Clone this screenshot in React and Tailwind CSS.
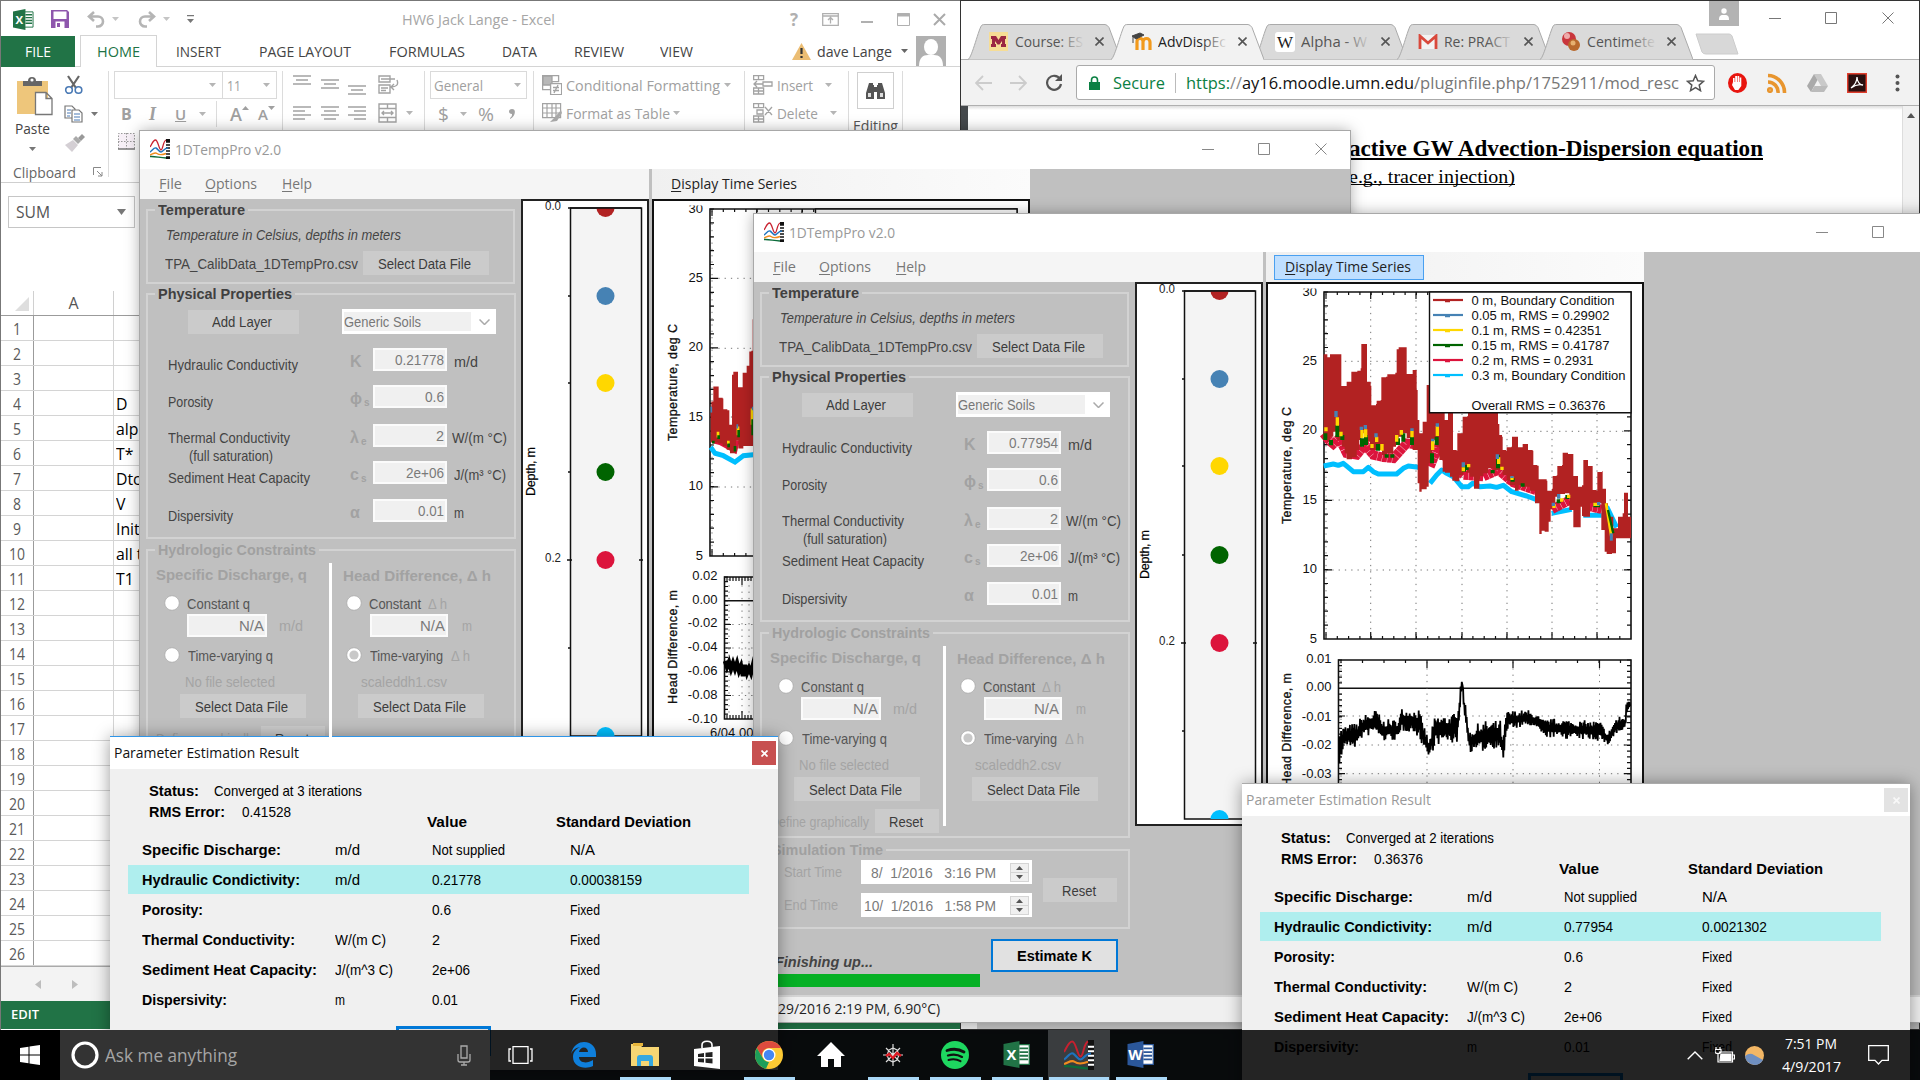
import React, { useLayoutEffect, useRef } from "react";

/* Text run fitted to a fixed advance width. */
function T({ w, className = "", children }) {
  const ref = useRef(null);
  useLayoutEffect(() => {
    const el = ref.current;
    el.style.transform = "none";
    const natural = el.getBoundingClientRect().width;
    if (natural > 0) el.style.transform = `scaleX(${w / natural})`;
  }, [w, children]);
  return (
    <span className="inline-flex shrink-0 items-center overflow-visible whitespace-pre" style={{ width: w }}>
      <span ref={ref} className={`inline-block origin-left ${className}`}>{children}</span>
    </span>
  );
}

const Caret = ({ className = "" }) => (
  <svg className={`h-[4px] w-[7px] shrink-0 ${className}`} viewBox="0 0 7 4"><path d="M0 0h7L3.5 4z" fill="currentColor" /></svg>
);

const Min = () => <svg className="h-3 w-3" viewBox="0 0 12 12"><path d="M0 6.5h12" stroke="currentColor" /></svg>;
const Max = () => <svg className="h-3 w-3" viewBox="0 0 12 12"><path d="M.5.5h11v11H.5z" fill="none" stroke="currentColor" /></svg>;
const Close = () => <svg className="h-3 w-3" viewBox="0 0 12 12"><path d="M.5.5l11 11M11.5.5l-11 11" stroke="currentColor" /></svg>;

/* ---------------------------------------------------------------- Excel */

const ExcelLogo = ({ className, color = "#217346", letter = "X" }) => (
  <svg className={className} viewBox="0 0 22 22">
    <path d="M12 3h9v16h-9z" fill="#fff" stroke={color} strokeWidth="1" />
    <path d="M13 6h7M13 9h7M13 12h7M13 15h7" stroke={color} strokeWidth="1.5" />
    <path d="M0 2.5L13 0v22L0 19.5z" fill={color} />
    <text x="6.5" y="15.5" fontSize="12" fontWeight="700" fill="#fff" textAnchor="middle" fontFamily="Open Sans, sans-serif">{letter}</text>
  </svg>
);

const ribbonTabs = [
  ["INSERT", 45, "ml-[19px]"], ["PAGE LAYOUT", 92, "ml-[38px]"], ["FORMULAS", 76, "ml-[38px]"],
  ["DATA", 35, "ml-[37px]"], ["REVIEW", 50, "ml-[37px]"], ["VIEW", 33, "ml-[36px]"],
];

const Lines = ({ d, className = "" }) => (
  <svg className={`h-[20px] w-[18px] shrink-0 ${className}`} viewBox="0 0 18 20"><path d={d} stroke="#a3a3a3" strokeWidth="1.4" /></svg>
);
const Sep = ({ className = "" }) => <div className={`w-px shrink-0 bg-[#dcdcdc] ${className}`} />;

function Ribbon() {
  return (
    <div className="flex h-[116px] items-start border-b border-[#cfcfcf] pt-[4px] text-[15px] text-[#a0a0a0]">
      <div className="flex h-[112px] w-[107px] shrink-0 flex-col">
        <div className="flex">
          <div className="ml-[14px] mt-[5px] flex w-[38px] flex-col">
            <svg className="ml-[1px] h-[40px] w-[38px]" viewBox="0 0 38 40">
              <path d="M1 5h31v33H1z" fill="#eec67b" />
              <path d="M7 10V5h5a4 4 0 018 0h6v5z" fill="#666" /><circle cx="16" cy="4" r="1.6" fill="#fff" />
              <path d="M19.500 16.500h10.500l6 6v16h-16.500zM30 16.500v6h6" fill="#fff" stroke="#777" strokeWidth="1.300" />
            </svg>
            <div className="mt-[4px] flex h-[16px] items-center text-[#444]"><T w={35}>Paste</T></div>
            <Caret className="ml-[14px] mt-[11px] text-[#777]" />
          </div>
          <div className="ml-[11px] flex flex-col">
            <svg className="mt-[4px] h-[20px] w-[20px]" viewBox="0 0 20 20" fill="none">
              <path d="M4 1l8 12M15 1L7 13" stroke="#666" strokeWidth="2.200" />
              <circle cx="5" cy="15" r="3.300" stroke="#4a7ab5" strokeWidth="1.600" /><circle cx="14.500" cy="15" r="3.300" stroke="#4a7ab5" strokeWidth="1.600" />
            </svg>
            <div className="mt-[10px] flex items-center">
              <svg className="h-[18px] w-[20px]" viewBox="0 0 20 18" fill="#fff" stroke="#777" strokeWidth="1.200">
                <path d="M1 1h7l3 3v9H1z" /><path d="M8 5h7l3 3v9H8z" /><path d="M3 5h4M3 8h4M3 11h3M10 9h6M10 12h6M10 15h6" stroke="#4a7ab5" />
              </svg>
              <Caret className="ml-[7px] text-[#777]" />
            </div>
            <svg className="mt-[11px] h-[18px] w-[21px]" viewBox="0 0 21 18">
              <path d="M1 11l8-5 5 5-6 7z" fill="#d4cfd4" /><path d="M9 5l3-3 5 5-3 3z" fill="#aaa" /><path d="M14 4l4-4 3 3-4 4z" fill="#999" />
            </svg>
          </div>
        </div>
        <div className="mt-[11px] flex items-center pl-[12px] text-[#666]">
          <div className="flex h-[18px] items-center"><T w={63}>Clipboard</T></div>
          <svg className="ml-[17px] h-[10px] w-[10px]" viewBox="0 0 10 10" fill="none" stroke="#888"><path d="M.5 8V.5H8M4 4l5 5M9 5v4H5" /></svg>
        </div>
      </div>
      <Sep className="h-[106px]" />
      <div className="ml-[5px] w-[163px] shrink-0">
        <div className="flex h-[28px] border border-[#dadada]">
          <div className="flex w-[109px] items-center justify-end border-r border-[#dadada] pr-[6px]"><Caret className="text-[#b5b5b5]" /></div>
          <div className="flex w-[53px] items-center pl-[4px]"><T w={14}>11</T><Caret className="ml-[22px] text-[#b5b5b5]" /></div>
        </div>
        <div className="mt-[3px] flex h-[24px] items-center font-semibold">
          <span className="ml-[7px] w-[28px] text-[16px] font-bold">B</span>
          <span className="w-[26px] font-['Liberation_Serif',serif] text-[18px] italic">I</span>
          <span className="w-[24px] text-[15px] underline">U</span>
          <Caret className="text-[#b5b5b5]" />
          <Sep className="ml-[10px] h-[26px]" />
          <span className="ml-[13px] flex w-[28px] items-center text-[18px]">A<Caret className="mb-[12px] rotate-180" /></span>
          <span className="flex items-center text-[15px]">A<Caret className="mb-[12px]" /></span>
        </div>
        <svg className="ml-[4px] mt-[7px] h-[17px] w-[17px]" viewBox="0 0 17 17" fill="#f7f0f7" stroke="#999"><path d="M.5 16V.5h16V16M8.500 0v16M0 8.500h17" strokeDasharray="1.500 1.500" /><path d="M0 16h17" stroke="#777" strokeWidth="1.500" /></svg>
      </div>
      <Sep className="ml-[5px] h-[70px]" />
      <div className="ml-[10px] flex w-[131px] shrink-0 flex-col">
        <div className="flex h-[28px] items-center">
          <Lines d="M0 1h18M3 5h12M0 9h18" /><Lines className="ml-[10px]" d="M0 5h18M3 9h12M0 13h18" /><Lines className="ml-[9px] mt-[6px]" d="M0 8h18M3 12h12M0 16h18" />
          <svg className="ml-[12px] h-[20px] w-[21px] shrink-0" viewBox="0 0 21 20" fill="none" stroke="#a3a3a3" strokeWidth="1.400"><path d="M1 1h11v6H1zM1 10h11v8H1zM3 4h14M3 13h7M3 15.500h5M19 5c2 5-1 7-6 7m3-3l-3 3 3 3" /></svg>
        </div>
        <div className="flex h-[28px] items-center">
          <Lines d="M0 4h18M0 8h12M0 12h18M0 16h12" /><Lines className="ml-[10px]" d="M0 4h18M3 8h12M0 12h18M3 16h12" /><Lines className="ml-[9px]" d="M0 4h18M6 8h12M0 12h18M6 16h12" />
          <svg className="ml-[12px] h-[20px] w-[19px] shrink-0" viewBox="0 0 19 20" fill="none" stroke="#a3a3a3" strokeWidth="1.400"><path d="M1 1h17v18H1zM1 5.500h17M1 14.500h17M9.500 1v4M9.500 15v4M4 10h11M6 8l-2 2 2 2M13 8l2 2-2 2" /></svg>
          <Caret className="ml-[9px] text-[#b5b5b5]" />
        </div>
      </div>
      <Sep className="h-[70px]" />
      <div className="ml-[5px] w-[97px] shrink-0">
        <div className="flex h-[28px] items-center justify-between border border-[#dadada] pl-[3px] pr-[5px]"><T w={49}>General</T><Caret className="text-[#b5b5b5]" /></div>
        <div className="mt-[3px] flex h-[24px] items-center text-[19px]"><span className="ml-[8px] w-[22px]">$</span><Caret className="text-[#b5b5b5]" /><span className="ml-[11px] w-[31px]"><T w={16}>%</T></span><svg className="h-[10px] w-[6px]" viewBox="0 0 6 10"><path d="M3 0c5 0 3 8-2 10V9c2-1 2-3 2-4-4 0-4-5 0-5z" fill="#a3a3a3" /></svg></div>
      </div>
      <Sep className="ml-[6px] h-[70px]" />
      <div className="ml-[8px] w-[195px] shrink-0">
        <div className="flex h-[28px] items-center">
          <svg className="h-[20px] w-[20px]" viewBox="0 0 20 20" fill="none" stroke="#a3a3a3" strokeWidth="1.300"><path d="M.6.6h16v6h-16zM.6 6.600h8v8h-8z" /><path d="M1 1h9v9H1z" fill="#b8b8b8" /><path d="M8.600 8.600h11v11h-11zM11 12.500h6M11 15.500h6M16 10l-4 8" fill="#fff" /></svg>
          <span className="ml-[4px]" /><T w={154}>Conditional Formatting</T><Caret className="ml-[4px] text-[#b5b5b5]" />
        </div>
        <div className="flex h-[28px] items-center">
          <svg className="h-[20px] w-[20px]" viewBox="0 0 20 20" fill="none" stroke="#a3a3a3" strokeWidth="1.200"><path d="M.6.6h18v14H.6zM.6 5h18M.6 10h18M5 1v14M10 1v14M14 1v14" /><path d="M19 7l-6 7-5 5 7-1 5-8z" fill="#aaa" stroke="none" /></svg>
          <span className="ml-[4px]" /><T w={104}>Format as Table</T><Caret className="ml-[3px] text-[#b5b5b5]" />
        </div>
      </div>
      <Sep className="ml-[7px] h-[70px]" />
      <div className="ml-[8px] w-[90px] shrink-0">
        <div className="flex h-[28px] items-center">
          <svg className="h-[20px] w-[20px]" viewBox="0 0 20 20" fill="none" stroke="#a3a3a3" strokeWidth="1.300"><path d="M.6.6h10v4H.6zM5.500 1v4M.6 13h10v6H.6zM5.500 13v6M.6 16h10M1 9h9M4 6L1 9l3 3M10 7h9v4h-9z" /></svg>
          <span className="ml-[4px]" /><T w={36}>Insert</T><Caret className="ml-[12px] text-[#b5b5b5]" />
        </div>
        <div className="flex h-[28px] items-center">
          <svg className="h-[20px] w-[20px]" viewBox="0 0 20 20" fill="none" stroke="#a3a3a3" strokeWidth="1.300"><path d="M.6.6h10v4H.6zM5.500 1v4M.6 13h10v6H.6zM5.500 13v6M.6 16h10M4 7h6v4H4zM12 4l7 8M19 4l-7 8" /></svg>
          <span className="ml-[4px]" /><T w={41}>Delete</T><Caret className="ml-[12px] text-[#b5b5b5]" />
        </div>
      </div>
      <Sep className="ml-[5px] h-[70px]" />
      <div className="ml-[4px] flex w-[45px] shrink-0 flex-col items-center">
        <div className="mt-[1px] flex h-[37px] w-[37px] items-center justify-center border border-[#cfcfcf]">
          <svg className="h-[17px] w-[19px]" viewBox="0 0 19 17" fill="#555"><path d="M3 1h4v2h1v14H0v-6zM12 1h4l3 10v6h-8V3h1zM8 5h3v5H8z" /><path d="M2 11h3v4H2zM14 11h3v4h-3z" fill="#ddd" /></svg>
        </div>
        <div className="mt-[7px] flex h-[18px] items-center text-[#555]"><T w={45}>Editing</T></div>
      </div>
      <Sep className="ml-[4px] h-[70px]" />
    </div>
  );
}

const cells = { 4: "D", 5: "alpha", 6: "T*", 7: "Dtc", 8: "V", 9: "Initial", 10: "all t", 11: "T1" };

function Excel() {
  return (
    <div className="absolute left-0 top-0 flex h-[1030px] w-[960px] flex-col overflow-hidden border-l border-t border-[#777] bg-white font-['Open_Sans',sans-serif]">
      <div className="flex h-[35px] shrink-0 items-center pt-[1px]">
        <ExcelLogo className="ml-[12px] h-[21px] w-[21px]" />
        <svg className="ml-[17px] h-[18px] w-[18px]" viewBox="0 0 18 18"><path d="M0 0h16l2 2v16H0z" fill="#8e57ad" /><path d="M2.500 1.500h13V9h-13zM4.500 11.500h9V18h-9z" fill="#fff" /><path d="M6 13h3v4H6z" fill="#8e57ad" /></svg>
        <svg className="ml-[18px] h-[17px] w-[18px]" viewBox="0 0 18 17" fill="none" stroke="#b5b5b5" strokeWidth="2.600"><path d="M7 1L2 5.500 7 10M2 5.500h9a5 5 0 010 10h-2" /></svg>
        <Caret className="ml-[7px] text-[#c5c5c5]" />
        <svg className="ml-[19px] h-[17px] w-[18px]" viewBox="0 0 18 17" fill="none" stroke="#b5b5b5" strokeWidth="2.600"><path d="M11 1l5 4.500L11 10M16 5.500H7a5 5 0 000 10h2" /></svg>
        <Caret className="ml-[7px] text-[#c5c5c5]" />
        <svg className="ml-[17px] h-[8px] w-[7px]" viewBox="0 0 7 8" fill="#777"><path d="M0 0h7v1.300H0zM0 4h7L3.500 8z" /></svg>
        <span className="ml-[208px]" /><T w={153} className="text-[15px] text-[#a6a6a6]">HW6 Jack Lange - Excel</T>
        <div className="ml-[235px] flex items-center text-[#b0b0b0]">
          <span className="w-[32px] text-[17px] font-bold leading-none">?</span>
          <svg className="h-[13px] w-[17px]" viewBox="0 0 17 13" fill="none" stroke="#b0b0b0" strokeWidth="1.300"><path d="M.7.7h15.600v11.600H.7zM1 3h15M8.500 10.500v-6M6 7l2.500-2.500L11 7" /></svg>
          <svg className="ml-[22px] h-[13px] w-[12px]" viewBox="0 0 12 13"><path d="M0 9h12" stroke="#b0b0b0" strokeWidth="2" /></svg>
          <svg className="ml-[24px] h-[13px] w-[13px]" viewBox="0 0 13 13" fill="none" stroke="#b0b0b0"><path d="M.5.5h12v12H.5z" /><path d="M0 2h13" strokeWidth="3" /></svg>
          <svg className="ml-[23px] h-[13px] w-[13px]" viewBox="0 0 13 13"><path d="M1 1l11 11M12 1L1 12" stroke="#aaa" strokeWidth="2" /></svg>
        </div>
      </div>
      <div className="flex h-[31px] shrink-0 items-center border-b border-[#d4d4d4] text-[15px] text-[#444]">
        <div className="flex h-[31px] w-[74px] items-center justify-center bg-[#217346] text-white"><T w={26}>FILE</T></div>
        <div className="ml-[5px] flex h-[32px] w-[77px] items-center justify-center border border-b-0 border-[#d4d4d4] bg-white text-[#217346]"><T w={43}>HOME</T></div>
        {ribbonTabs.map(([label, w, gap]) => (<span key={label} className={`${gap} flex`}><T w={w}>{label}</T></span>))}
        <svg className="ml-[99px] h-[17px] w-[19px]" viewBox="0 0 19 17"><path d="M9.500 0L19 17H0z" fill="#ebbd73" /><path d="M9.500 5v6M9.500 13v2" stroke="#333" strokeWidth="2.200" /></svg>
        <span className="ml-[6px]" /><T w={75}>dave Lange</T><Caret className="ml-[9px] text-[#666]" />
        <svg className="ml-[8px] h-[30px] w-[30px]" viewBox="0 0 30 30"><path d="M0 0h30v30H0z" fill="#b0b0b0" /><ellipse cx="15" cy="11" rx="7" ry="8" fill="#fff" /><path d="M3 30c0-8 4-11 9-11h6c5 0 9 3 9 11z" fill="#fff" /></svg>
      </div>
      <Ribbon />
      <div className="ml-[7px] mt-[13px] flex h-[32px] w-[127px] shrink-0 items-center justify-between border border-[#c6c6c6] pl-[7px] pr-[8px] text-[16px] text-[#555]">
        <T w={34}>SUM</T><svg className="h-[6px] w-[9px]" viewBox="0 0 9 6"><path d="M0 0h9L4.500 6z" fill="#777" /></svg>
      </div>
      <div className="mt-[63px] flex h-[25px] shrink-0 border-b border-[#9b9b9b] text-[16px] text-[#555]">
        <div className="flex w-[33px] items-end justify-end border-r border-[#d0d0d0] pb-[4px] pr-[4px]"><svg className="h-[14px] w-[14px]" viewBox="0 0 14 14"><path d="M14 0v14H0z" fill="#dedede" /></svg></div>
        <div className="flex w-[80px] items-center justify-center border-r border-[#d0d0d0]">A</div>
      </div>
      {Array.from({ length: 26 }, (_, i) => i + 1).map((n) => (
        <div key={n} className="flex h-[25px] shrink-0 border-b border-[#d4d4d4] text-[16px] text-[#5a5a5a]">
          <div className="flex w-[33px] items-center justify-center border-r border-[#9b9b9b] pt-[2px]"><T w={n > 9 ? 16 : 8}>{n}</T></div>
          <div className="w-[80px] border-r border-[#d4d4d4]" />
          <div className="flex items-center pl-[2px] pt-[2px] text-[17px] text-black"><span className="origin-left scale-x-[0.93]">{cells[n] || ""}</span></div>
        </div>
      ))}
      <div className="flex h-[35px] shrink-0 items-center border-t border-[#aaa] bg-[#f3f3f3]">
        <svg className="ml-[34px] h-[9px] w-[6px]" viewBox="0 0 6 9"><path d="M6 0v9L0 4.500z" fill="#bdbdbd" /></svg>
        <svg className="ml-[31px] h-[9px] w-[6px]" viewBox="0 0 6 9"><path d="M0 0v9l6-4.500z" fill="#bdbdbd" /></svg>
      </div>
      <div className="flex h-[28px] shrink-0 items-center bg-[#217346] pl-[10px] text-[13px] font-semibold text-white"><T w={28}>EDIT</T></div>
    </div>
  );
}

/* --------------------------------------------------------------- Chrome */

const favicons = {
  m: <svg className="h-[19px] w-[19px]" viewBox="0 0 19 19"><path d="M0 0h19v19H0z" fill="#f6dd96" /><path d="M2 4h5l2.500 4L12 4h5v3h-1v5h1v3h-5v-3h1V9l-2.500 3.500h-2L6 9v3h1v3H2v-3h1V7H2z" fill="#9b2743" /></svg>,
  moodle: <svg className="h-[20px] w-[20px]" viewBox="0 0 20 20"><path d="M5 18V10a3 3 0 016-1v9M11 18V10a3 3 0 017 0v8" fill="none" stroke="#f29a1d" strokeWidth="3.200" /><path d="M0 4l8-3 4 2-8 4zM1 5v6" fill="#444" stroke="#444" /></svg>,
  w: <svg className="h-[20px] w-[20px]" viewBox="0 0 20 20"><rect width="20" height="20" rx="3" fill="#fff" /><text x="10" y="16" textAnchor="middle" fontSize="17" fontFamily="Liberation Serif, serif" fill="#222">W</text></svg>,
  gmail: <svg className="h-[16px] w-[20px]" viewBox="0 0 20 16"><path d="M2 1h16v14H2z" fill="#f3f3f3" /><path d="M2 15V2l8 7 8-7v13" fill="none" stroke="#d9493c" strokeWidth="2.800" /></svg>,
  ball: <svg className="h-[20px] w-[20px]" viewBox="0 0 20 20"><circle cx="8" cy="7" r="7" fill="#c9363c" /><circle cx="6" cy="4" r="3" fill="#eaa" /><circle cx="13" cy="13" r="6" fill="#b8692d" /><circle cx="12" cy="11" r="2.500" fill="#e6b070" /></svg>,
};

const browserTabs = [
  ["m", "Course: ES", 68, false], ["moodle", "AdvDispEc", 68, true], ["w", "Alpha - W", 66, false],
  ["gmail", "Re: PRACT", 66, false], ["ball", "Centimete", 68, false],
];

function Chrome() {
  return (
    <div className="absolute left-[960px] top-0 flex h-[1030px] w-[960px] flex-col overflow-hidden border border-[#333] bg-white font-['Open_Sans',sans-serif]">
      <div className="flex h-[58px] shrink-0 items-end">
        <div className="flex pl-[7px]">
          {browserTabs.map(([icon, title, w, active]) => (
            <div key={title} className={`relative -mr-[10px] flex h-[35px] w-[153px] items-center ${active ? "z-10" : ""}`}>
              <svg className="absolute inset-0 h-[36px] w-[153px]" viewBox="0 0 153 36"><path d="M0 35.500C4 34 11 3 14 1q1-.5 3-.5h120q2 0 4 3L153 35.500" fill={active ? "#f2f2f2" : "#dadada"} stroke="#aaa" />{active && <path d="M1 36h151" stroke="#f2f2f2" strokeWidth="2" />}</svg>
              <span className="relative ml-[21px] flex h-[20px] w-[20px] items-center">{favicons[icon]}</span>
              <span className={`relative ml-[6px] flex w-[70px] text-[15px] ${active ? "text-[#222]" : "text-[#555]"}`}>
                <T w={w}>{title}</T>
                <span className={`absolute right-0 top-0 h-full w-[28px] bg-linear-to-r from-transparent ${active ? "to-[#f2f2f2]" : "to-[#dadada]"}`} />
              </span>
              <svg className="relative ml-[10px] h-[9px] w-[9px]" viewBox="0 0 9 9"><path d="M.5.5l8 8M8.500.5l-8 8" stroke="#555" strokeWidth="1.600" /></svg>
            </div>
          ))}
        </div>
        <svg className="mb-[4px] ml-[12px] h-[22px] w-[44px]" viewBox="0 0 44 22"><path d="M1 1h33q2 0 3 2l6 18H11q-3 0-4-2z" fill="#d8d8d8" stroke="#ccc" /></svg>
        <div className="-ml-[36px] flex items-start self-start text-[#777]">
          <div className="ml-[6px] flex h-[25px] w-[30px] items-center justify-center bg-[#b3b3b3]"><svg className="h-[12px] w-[12px]" viewBox="0 0 12 12" fill="#fff"><circle cx="6" cy="3" r="2.700" /><path d="M1 12c0-5 2-5 5-5s5 0 5 5z" /></svg></div>
          <span className="ml-[30px] mt-[11px]"><Min /></span><span className="ml-[44px] mt-[11px]"><Max /></span><span className="ml-[45px] mt-[11px]"><Close /></span>
        </div>
      </div>
      <div className="flex h-[47px] shrink-0 items-center border-b border-t border-[#b0b0b0] bg-[#f2f2f2]">
        <svg className="ml-[14px] h-[16px] w-[17px]" viewBox="0 0 17 16" fill="none" stroke="#ccc" strokeWidth="1.800"><path d="M8 1L1 8l7 7M1 8h16" /></svg>
        <svg className="ml-[18px] h-[16px] w-[17px]" viewBox="0 0 17 16" fill="none" stroke="#ccc" strokeWidth="1.800"><path d="M9 1l7 7-7 7M16 8H0" /></svg>
        <svg className="ml-[18px] h-[17px] w-[18px]" viewBox="0 0 18 17" fill="none" stroke="#555" strokeWidth="2.200"><path d="M15 5a7 7 0 101 5" /><path d="M17 0v7h-7z" fill="#555" stroke="none" /></svg>
        <div className="ml-[13px] flex h-[35px] w-[639px] items-center rounded-[3px] border border-[#aaa] bg-white text-[17px]">
          <svg className="ml-[12px] h-[14px] w-[11px]" viewBox="0 0 11 14"><path d="M0 6h11v8H0z" fill="#0b8043" /><path d="M2.500 7V4a3 3 0 016 0v3" fill="none" stroke="#0b8043" strokeWidth="1.600" /></svg>
          <span className="ml-[13px]" /><T w={52} className="text-[#0b8043]">Secure</T>
          <div className="ml-[10px] mr-[10px] h-[20px] w-px bg-[#bbb]" />
          <T w={44} className="text-[#0b8043]">https:</T><T w={12} className="text-[#888]">//</T><T w={172} className="text-[#111]">ay16.moodle.umn.edu</T><T w={265} className="text-[#777]">/pluginfile.php/1752911/mod_resc</T>
          <svg className="ml-[7px] h-[18px] w-[19px]" viewBox="0 0 19 18"><path d="M9.500 1.500l2.300 5.300 5.700.5-4.300 3.800 1.300 5.600-5-3-5 3 1.300-5.600L1.500 7.300l5.700-.5z" fill="none" stroke="#555" strokeWidth="1.500" /></svg>
        </div>
        <svg className="ml-[13px] h-[20px] w-[19px]" viewBox="0 0 19 20"><ellipse cx="9.500" cy="10" rx="9.500" ry="10" fill="#e8150f" /><path d="M5 9V5h1.600v4h.6V3h1.800v6h.5V3h1.700v6h.5V4.500h1.600V13l-3 4H7l-3-5z" fill="#fff" /></svg>
        <svg className="ml-[20px] h-[20px] w-[20px]" viewBox="0 0 20 20" fill="none" stroke="#e8952e" strokeWidth="3.600"><circle cx="3" cy="17" r="1.300" /><path d="M1 9a10 10 0 0110 11M1 2.500A17 17 0 0117.500 20" /></svg>
        <svg className="ml-[20px] h-[18px] w-[21px]" viewBox="0 0 21 18"><path d="M7 0h7l7 12h-7z" fill="#c9c9c9" /><path d="M7 0l3.500 6L4 18 0 12z" fill="#aaa" /><path d="M7.500 12H21l-4 6H4z" fill="#bbb" /></svg>
        <svg className="ml-[19px] h-[20px] w-[20px]" viewBox="0 0 20 20"><path d="M.7.700h18.600v18.600H.7z" fill="#2a1010" stroke="#e03e2d" strokeWidth="1.500" /><path d="M4 15c4-3 6-7 6-11 0 5 3 8 6 8-4-1-8 0-12 3z" fill="none" stroke="#fff" strokeWidth="1.300" /></svg>
        <svg className="ml-[28px] h-[18px] w-[5px]" viewBox="0 0 5 18" fill="#555"><circle cx="2.500" cy="2.500" r="2" /><circle cx="2.500" cy="9" r="2" /><circle cx="2.500" cy="15.500" r="2" /></svg>
      </div>
      <div className="flex grow">
        <div className="w-[7px] bg-[#45494c]" />
        <div className="w-[934px] bg-linear-to-b from-[#ddd] to-white to-[4px] font-['Liberation_Serif',serif] text-black">
          <div className="ml-[381px] mt-[29px] flex h-[29px] items-center text-[23px] font-bold underline [text-decoration-skip-ink:none]"><T w={414}>active GW Advection-Dispersion equation</T></div>
          <div className="ml-[381px] flex h-[26px] items-center text-[19px] underline [text-decoration-skip-ink:none]"><T w={166}>e.g., tracer injection)</T></div>
        </div>
        <div className="flex w-[17px] justify-center border-l border-[#ddd] bg-[#f1f1f1] pt-[7px]"><svg className="h-[5px] w-[8px]" viewBox="0 0 8 5"><path d="M0 5h8L4 0z" fill="#555" /></svg></div>
      </div>
      <div className="h-[17px] shrink-0 border-l-[16px] border-[#e8e8e8] bg-[#c1c1c1]" />
    </div>
  );
}

/* ----------------------------------------------------------- 1DTempPro */

const TempLogo = ({ className }) => (
  <svg className={className} viewBox="0 0 20 20" fill="none">
    <path d="M16 0h4v20h-4z" fill="#111" /><path d="M16 4.500h4M16 7.500h4M16 10.500h4M16 13.500h4M16 16.500h4" stroke="#fff" strokeWidth="1.300" />
    <path d="M0 8C2 5 3 1 5.500 1S9 11 11 11s2-9 5-10" stroke="#c8202f" strokeWidth="1.300" />
    <path d="M0 13c2-1 4-5 6-4s3 4 5 4 3-4 7-4" stroke="#1e73be" strokeWidth="1.400" />
    <path d="M0 16c3-1 5-3 7-1.500s5 1.500 9 0" stroke="#f08c1e" strokeWidth="1.400" /><path d="M0 17.500c4-.5 9 1 16 1.500" stroke="#0b6b3a" strokeWidth="1.400" />
  </svg>
);

const Btn = ({ w, className, children }) => (
  <div className={`flex shrink-0 items-center justify-center bg-[#cbcbcb] pr-[3px] text-[#3c3c3c] ${className}`}><T w={w}>{children}</T></div>
);
const Field = ({ w, className, children }) => (
  <div className={`flex h-[23px] shrink-0 items-center justify-end border-2 border-[#fbfbfb] bg-[#f0f0f0] pb-px pr-px text-[15px] text-[#7a7a7a] ${className}`}><T w={w}>{children}</T></div>
);
const Legend = ({ w, dim, children }) => (
  <div className={`-mt-[10px] ml-[7px] flex h-[16px] w-fit items-center bg-[#c0c0c0] px-[3px] font-bold ${dim ? "text-[#a0a0a0]" : "text-[#404040]"}`}><T w={w}>{children}</T></div>
);
const Radio = ({ on }) => (
  <svg className="h-[16px] w-[16px] shrink-0" viewBox="0 0 16 16"><circle cx="8" cy="8" r="7.300" fill="#fff" stroke="#aaa" strokeWidth=".8" />{on && <circle cx="8" cy="8" r="4.600" fill="#c8c8c8" />}</svg>
);
const Sym = ({ children, sub }) => (
  <span className="mt-[4px] w-[22px] shrink-0 whitespace-nowrap text-[16px] font-bold leading-none text-[#a2a2a2]">{children}{sub && <sub className="ml-[2px] text-[10px]">{sub}</sub>}</span>
);

function PropRow({ label, lw, sym, sub, value, vw, unit, uw, className }) {
  return (
    <div className={`ml-[20px] flex h-[23px] items-center ${className}`}>
      <div className="mt-[9px] w-[182px] shrink-0"><T w={lw}>{label}</T></div>
      <Sym sub={sub}>{sym}</Sym>
      <Field w={vw} className="ml-px w-[74px]">{value}</Field>
      {unit && <div className="ml-[7px] mt-[4px]"><T w={uw}>{unit}</T></div>}
    </div>
  );
}

function Spinner() {
  return (
    <div className="flex h-[19px] w-[19px] flex-col gap-px bg-[#d5d5d5] p-px">
      <div className="flex grow items-center justify-center bg-[#f0f0f0]"><svg className="h-[4px] w-[7px]" viewBox="0 0 7 4"><path d="M0 4h7L3.500 0z" fill="#555" /></svg></div>
      <div className="flex grow items-center justify-center bg-[#f0f0f0]"><Caret className="text-[#555]" /></div>
    </div>
  );
}

function LeftPane({ k, file }) {
  return (
    <div className="flex w-[381px] shrink-0 flex-col pl-[6px] text-[15px] leading-none text-[#444]">
      <div className="mt-[10px] h-[75px] w-[369px] shrink-0 border-2 border-[#d2d2d2]">
        <Legend w={87}>Temperature</Legend>
        <div className="ml-[18px] mt-[7px] flex h-[20px] items-center italic"><T w={235}>Temperature in Celsius, depths in meters</T></div>
        <div className="ml-[17px] mt-[7px] flex h-[24px] items-center"><T w={193}>TPA_CalibData_1DTempPro.csv</T><Btn w={93} className="ml-[5px] h-[24px] w-[126px]">Select Data File</Btn></div>
      </div>
      <div className="mt-[9px] h-[246px] w-[370px] shrink-0 border-2 border-[#d2d2d2]">
        <Legend w={134}>Physical Properties</Legend>
        <div className="ml-[40px] mt-[8px] flex h-[25px] items-center">
          <Btn w={60} className="h-[24px] w-[111px]">Add Layer</Btn>
          <div className="ml-[43px] flex h-[25px] w-[154px] items-center border-2 border-white bg-white">
            <div className="flex h-[19px] w-[127px] items-center bg-[#f0f0f0] text-[#777]"><T w={77}>Generic Soils</T></div>
            <svg className="ml-[8px] h-[6px] w-[11px]" viewBox="0 0 11 6"><path d="M.5.5l5 5 5-5" fill="none" stroke="#aaa" strokeWidth="1.500" /></svg>
          </div>
        </div>
        <PropRow className="mt-[14px]" label="Hydraulic Conductivity" lw={130} sym="K" value={k} vw={49} unit="m/d" uw={24} />
        <PropRow className="mt-[14px]" label="Porosity" lw={45} sym="ϕ" sub="s" value="0.6" vw={19} />
        <div className="ml-[20px] mt-[16px] flex h-[23px] items-center">
          <div className="mt-[21px] w-[182px] shrink-0"><div className="flex h-[18px] items-center"><T w={122}>Thermal Conductivity</T></div><div className="ml-[21px] flex h-[18px] items-center"><T w={84}>(full saturation)</T></div></div>
          <Sym sub="e">λ</Sym><Field w={8} className="ml-px w-[74px]">2</Field><div className="ml-[5px] mt-[4px]"><T w={55}>W/(m °C)</T></div>
        </div>
        <PropRow className="mt-[14px]" label="Sediment Heat Capacity" lw={142} sym="c" sub="s" value="2e+06" vw={38} unit="J/(m³ °C)" uw={52} />
        <PropRow className="mt-[15px]" label="Dispersivity" lw={65} sym="α" value="0.01" vw={26} unit="m" uw={10} />
      </div>
      <div className="mt-[10px] h-[206px] w-[370px] shrink-0 border-2 border-[#d2d2d2]">
        <Legend w={158} dim>Hydrologic Constraints</Legend>
        <div className="mt-[6px] flex h-[180px]">
          <div className="flex w-[181px] shrink-0 flex-col text-[#555]">
            <div className="ml-[8px] flex h-[22px] shrink-0 items-center font-bold text-[#a2a2a2]"><T w={151}>Specific Discharge, q</T></div>
            <div className="ml-[16px] mt-[8px] flex h-[20px] shrink-0 items-center gap-[7px]"><Radio /><T w={63}>Constant q</T></div>
            <div className="ml-[39px] mt-px flex h-[23px] shrink-0 items-center"><Field w={25} className="w-[80px]">N/A</Field><span className="ml-[12px] flex text-[#a4a4a4]"><T w={24}>m/d</T></span></div>
            <div className="ml-[16px] mt-[8px] flex h-[20px] shrink-0 items-center gap-[8px]"><Radio /><T w={85}>Time-varying q</T></div>
            <div className="ml-[37px] mt-[8px] flex h-[16px] shrink-0 items-center text-[#a4a4a4]"><T w={90}>No file selected</T></div>
            <Btn w={93} className="ml-[32px] mt-[5px] h-[24px] w-[126px]">Select Data File</Btn>
            <div className="ml-[8px] mt-[8px] flex h-[24px] shrink-0 items-center justify-between text-[#a4a4a4]"><T w={99}>Define graphically</T><Btn w={34} className="mr-[4px] h-[24px] w-[64px]">Reset</Btn></div>
          </div>
          <div className="z-10 w-[3px] shrink-0 bg-white" />
          <div className="flex flex-col text-[#555]">
            <div className="ml-[11px] mt-px flex h-[22px] shrink-0 items-center font-bold text-[#a2a2a2]"><T w={148}>Head Difference, Δ h</T></div>
            <div className="ml-[14px] mt-[7px] flex h-[20px] shrink-0 items-center gap-[7px]"><Radio /><T w={52}>Constant</T><T w={19} className="text-[#a4a4a4]">Δ h</T></div>
            <div className="ml-[38px] mt-px flex h-[23px] shrink-0 items-center"><Field w={25} className="w-[78px]">N/A</Field><span className="ml-[14px] flex text-[#a4a4a4]"><T w={10}>m</T></span></div>
            <div className="ml-[14px] mt-[8px] flex h-[20px] shrink-0 items-center gap-[8px]"><Radio on /><T w={73}>Time-varying</T><T w={19} className="text-[#a4a4a4]">Δ h</T></div>
            <div className="ml-[29px] mt-[8px] flex h-[16px] shrink-0 items-center text-[#a4a4a4]"><T w={86}>{file}</T></div>
            <Btn w={93} className="ml-[26px] mt-[5px] h-[24px] w-[126px]">Select Data File</Btn>
          </div>
        </div>
      </div>
      <div className="mt-[11px] h-[80px] w-[370px] shrink-0 border-2 border-[#d2d2d2]">
        <Legend w={111} dim>Simulation Time</Legend>
        <div className="flex items-center">
          <div className="ml-[22px] w-[77px] pt-[2px] text-[#a4a4a4]"><div className="flex h-[23px] items-center"><T w={58}>Start Time</T></div><div className="mt-[10px] flex h-[23px] items-center"><T w={54}>End Time</T></div></div>
          <div className="w-[171px] pt-[3px] text-[#7a7a7a]">
            <div className="flex h-[24px] items-center justify-between bg-white pl-[10px] pr-[3px]"><T w={125}>{"8/  1/2016   3:16 PM"}</T><Spinner /></div>
            <div className="mt-[9px] flex h-[24px] items-center justify-between bg-white pl-[3px] pr-[3px]"><T w={132}>{"10/  1/2016   1:58 PM"}</T><Spinner /></div>
          </div>
          <Btn w={34} className="ml-[11px] mt-[6px] h-[24px] w-[74px]">Reset</Btn>
        </div>
      </div>
      <div className="mt-[10px] flex">
        <div className="w-[231px]"><div className="mt-[13px] flex h-[18px] items-center pl-[15px] font-bold italic"><T w={98}>Finishing up...</T></div><div className="mt-[4px] h-[13px] w-[220px] bg-[#06b025]" /></div>
        <div className="flex h-[33px] w-[127px] items-center justify-center border-2 border-[#0078d7] bg-[#e1e1e1] font-bold text-black"><T w={75}>Estimate K</T></div>
      </div>
    </div>
  );
}

const probes = [[9, "#b22222"], [97, "#4682b4"], [184, "#ffd700"], [273, "#006400"], [361, "#dc143c"], [537, "#00bfff"]];

function DepthPanel() {
  return (
    <svg className="h-[544px] w-[128px] shrink-0" viewBox="0 0 128 544" fontFamily="Liberation Sans, Arial, sans-serif">
      <path d="M1 1h126v542H1z" fill="#fff" stroke="#222" strokeWidth="2" />
      <clipPath id="col"><path d="M49 9h71v528H49z" /></clipPath>
      <path d="M49.500 9h71v528h-71z" fill="#f4f4f4" stroke="#111" strokeWidth="1.500" />
      <g clipPath="url(#col)">{probes.map(([y, c]) => <circle key={y} cx="84.500" cy={y} r="9" fill={c} />)}</g>
      <path d="M47 9h73M47 97h3M47 184h3M47 273h3M46 361h5M118 361h4M47 449h3" stroke="#111" strokeWidth="1.300" />
      <text x="24" y="11" fontSize="13" textLength="16" lengthAdjust="spacingAndGlyphs" fill="#222">0.0</text>
      <text x="24" y="363" fontSize="13" textLength="16" lengthAdjust="spacingAndGlyphs" fill="#222">0.2</text>
      <text transform="translate(14 297) rotate(-90)" fontSize="12.500" textLength="49" fill="#000" stroke="#000" strokeWidth=".2">Depth, m</text>
    </svg>
  );
}

const legend = [
  ["#b22222", "0 m, Boundary Condition", 143], ["#4682b4", "0.05 m, RMS = 0.29902", 138], ["#ffd700", "0.1 m, RMS = 0.42351", 130],
  ["#006400", "0.15 m, RMS = 0.41787", 138], ["#dc143c", "0.2 m, RMS = 0.2931", 122], ["#00bfff", "0.3 m, Boundary Condition", 154],
];

/* Head-difference envelope: x, centre, half-amplitude. */
const headB = [[228, 550, 60], [233, 560, 65], [238, 530, 32], [270, 525, 38], [282, 500, 34], [300, 492, 34], [316, 485, 38], [326, 512, 34], [350, 510, 30], [366, 510, 34], [372, 480, 36], [390, 480, 34], [412, 490, 42], [424, 530, 34], [436, 570, 28], [450, 510, 44], [500, 505, 44], [506, 450, 60], [510, 375, 20], [513, 370, 16], [517, 440, 30], [524, 500, 24], [528, 545, 30], [556, 530, 46], [600, 520, 38], [607, 580, 34], [612, 500, 44], [620, 480, 28], [665, 475, 24], [684, 485, 22], [700, 505, 26], [740, 505, 30], [780, 510, 28], [830, 512, 30], [848, 538, 18], [866, 500, 26], [888, 490, 26], [892, 440, 26], [901, 430, 16]];

function headPath(env) {
  let seed = 7;
  const rnd = () => { seed = (seed * 16807) % 2147483647; return seed / 2147483647; };
  const pts = [];
  for (let i = 0; i < env.length - 1; i++) {
    const [x0, c0, a0] = env[i], [x1, c1, a1] = env[i + 1];
    const n = Math.max(1, Math.round((x1 - x0) / 1.3));
    for (let j = 0; j < n; j++) {
      const t = j / n, sgn = pts.length % 2 ? 1 : -1, r = rnd();
      pts.push([x0 + (x1 - x0) * t, c0 + (c1 - c0) * t + sgn * (a0 + (a1 - a0) * t) * (0.35 + 0.7 * r * r)]);
    }
  }
  return "M" + pts.map(([x, y]) => `${(486 + x * 0.4337).toFixed(1)} ${(346 + y / 3).toFixed(1)}`).join("L");
}

/* Turns an outline into horizontal and vertical segments only. */
function stepped(points) {
  const p = points.split(" ").map((s) => s.split(",").map(Number));
  return p.flatMap(([x, y], i) => (i ? [`${x},${p[i - 1][1]}`, `${x},${y}`] : [`${x},${y}`])).join(" ");
}

const blotches = [
  ["#dc143c", "M221 640L236 660 250 672 268 655 290 700 320 705 345 675 370 705 400 712 430 715 470 670 500 675M540 740L565 680 605 735 640 765 700 770 745 750 790 788 860 812M906 868L960 840M1000 855L1055 868", 26],
  ["#006400", "M226 640v20M243 660v16M262 615v36M277 645v15M336 655v25M348 645v30M384 672v20M410 703v10M427 703v10M444 655v20M460 640v25M486 650v25M546 700v30M560 650v25M650 735v15M642 740v15M744 705v40M728 750v10M788 775v10M818 790v10M926 838v12M952 825v12M1030 856h20", 12],
  ["#ffd700", "M228 622v12M262 592v25M273 635v14M336 630v24M347 628v24M380 650v16M366 672v12M396 672v20M440 645v20M454 630v14M486 632v20M548 660v30M562 618v30M640 742v12M656 732v10M746 712v20M756 740v10M786 770v10M912 852v12M935 835v10M956 824v10M1030 853h18", 10],
  ["#4682b4", "M258 573v18M334 620v10M346 615v12M378 640v12M486 625v8M548 656v8M562 610v10M640 727v14M742 703v14M786 768v6M926 822v14M910 848v10M1046 846v10", 10],
];

const redB = "221,403 232,403 232,412 240,403 270,403 274,498 288,498 290,485 302,485 304,455 322,452 332,445 334,372 348,372 351,485 362,497 364,556 378,552 380,542 392,540 394,472 408,470 412,463 436,458 440,388 446,382 468,382 470,462 484,462 488,450 498,450 500,510 503,600 508,640 516,640 518,605 530,603 530,495 538,490 538,570 582,570 584,600 592,600 594,570 606,570 609,690 620,692 622,640 636,640 638,590 652,588 654,570 742,570 744,612 748,645 756,650 758,690 768,692 770,682 784,680 786,650 802,650 804,682 816,682 818,672 832,672 834,690 848,692 850,735 862,737 866,778 890,782 892,812 906,806 908,768 920,766 922,738 936,735 938,698 952,698 954,702 966,702 970,768 984,800 996,796 1000,720 1012,720 1014,738 1026,738 1028,810 1040,812 1042,756 1056,754 1058,806 1068,850 1074,890 1090,925 1104,925 1104,890 1118,880 1122,818 1132,818 1134,890 1143,895 1143,955 1103,955 1098,1000 1086,1002 1070,995 1064,930 1054,850 1028,850 1020,890 1000,888 996,860 992,922 978,922 970,870 958,820 945,822 930,830 916,850 906,868 902,905 896,935 884,932 875,942 868,850 855,812 840,800 820,795 806,812 795,795 780,782 770,765 758,750 730,745 715,760 700,768 690,778 688,806 680,806 672,770 660,758 650,750 640,765 628,784 615,782 607,770 600,758 585,755 578,720 568,680 560,660 552,690 546,730 536,800 530,808 515,815 508,790 503,690 488,655 470,640 458,650 446,655 438,680 430,700 410,705 396,690 370,690 360,665 350,640 334,660 328,690 320,712 306,718 290,700 284,680 276,660 262,635 250,650 240,665 232,655 221,640";
const redA = "632,650 634,620 640,600 640,578 654,578 656,610 668,612 670,642 682,645 688,685 694,685 696,545 700,537 712,537 714,580 724,580 728,540 740,520 748,480 754,478 758,390 770,385 770,745 730,752 715,730 708,765 690,755 680,745 668,738 655,735 632,735";

const yTicks = (x, len, y0, step, n) => Array.from({ length: n }, (_, i) => `M${x} ${(y0 + i * step).toFixed(1)}h${len}`).join("");
const xTicks = (y, len, x0, step, n) => Array.from({ length: n }, (_, i) => `M${(x0 + i * step).toFixed(1)} ${y}v${len}`).join("");

/* Drawn in window coordinates, panel origin at (512, 68). */
function ChartPanel({ variant }) {
  const b = variant === "b";
  const headLabels = b ? [["0.01", 448.5], ["0.00", 477], ["-0.01", 506.5], ["-0.02", 535], ["-0.03", 563.5]] : [["0.02", 448.500], ["0.00", 472.500], ["-0.02", 496], ["-0.04", 520], ["-0.06", 543.500], ["-0.08", 568], ["-0.10", 592]];
  const headGrid = b ? [502, 531, 559.700] : [493.500, 517, 540.800, 564.500];
  const gridX = [572, 616.700, 662, 708, 753, 798, 843];
  return (
    <svg className="h-[544px] w-[378px] shrink-0" viewBox="512 68 378 544" fontFamily="Liberation Sans, Arial, sans-serif" fontSize="13" fill="#111">
      <path d="M513 69h376v542H513z" fill="#fff" stroke="#111" strokeWidth="2" />
      <path d="M570 78h307v347H570z" fill="none" stroke="#111" strokeWidth="1.600" />
      <path d={gridX.map((x) => `M${x} 80v343`).join("") + "M572 147.300h303M572 217.300h303M572 286h303M572 356h303"} stroke="#777" strokeDasharray="1.300 5" fill="none" />
      <path d={yTicks(570, 4, 78, 13.88, 25) + yTicks(873, 4, 78, 13.88, 25) + xTicks(78, 3, 572, 11.3, 27) + xTicks(422, 3, 572, 11.3, 27) + gridX.map((x) => `M${x} 78v7M${x} 418v7`).join("") + yTicks(570, 8, 147.3, 69.5, 4) + yTicks(870, 7, 147.3, 69.5, 4)} stroke="#111" strokeWidth="1.200" />
      {b ? (
        <g transform="translate(496 6) scale(.33333)">
          <path d="M221 738L250 732 265 736 280 730 292 740 310 755 340 755 355 742 370 755 385 762 440 762 460 745 475 738 505 742M540 790L560 765 575 750 590 760 610 770 635 800 655 800 668 790 690 800 720 798 740 802 760 796 785 815 830 828 868 842M905 880L965 868M1000 886L1055 886M1070 860L1100 922" fill="none" stroke="#00bfff" strokeWidth="15" strokeLinejoin="round" />
          <path d={blotches[0][1]} fill="none" stroke="#dc143c" strokeWidth="28" strokeDasharray="14 1" />
          <polygon points={stepped(redB)} fill="#b22222" />
          {blotches.slice(1).map(([c, d, w]) => <path key={c} d={d} fill="none" stroke={c} strokeWidth={w} />)}
          <path d="M1068 850L1076 900 1084 950" stroke="#ffd700" strokeWidth="8" fill="none" /><path d="M1074 870L1082 905 1090 940" stroke="#006400" strokeWidth="7" fill="none" /><path d="M1084 940v22" stroke="#4682b4" strokeWidth="9" />
        </g>
      ) : (
        <g transform="translate(360 49) scale(.33333 .35714)">
          <path d="M632 748L645 765 670 772 705 790 730 772 775 768" fill="none" stroke="#00bfff" strokeWidth="14" />
          <path d="M640 730L660 735 705 758 712 730" fill="none" stroke="#dc143c" strokeWidth="14" />
          <polygon points={stepped(redA)} fill="#b22222" />
          <path d="M654 705v16M685 730v10M714 690v25M756 640v45" stroke="#ffd700" strokeWidth="8" /><path d="M656 715v10M686 738v10M705 745v15M716 700v20M758 670v45M640 730v8" stroke="#006400" strokeWidth="8" /><path d="M634 635v16M712 684v12M758 635v10" stroke="#4682b4" strokeWidth="5" />
        </g>
      )}
      <path d="M675.500 78H877v120.700H675.500z" fill="#fff" stroke="#111" strokeWidth="1.400" />
      {legend.map(([c, t, w], i) => (
        <g key={t}><path d={`M679 ${86 + i * 15}h30`} stroke={c} strokeWidth="2.200" /><path d={`M691 ${87.5 + i * 15}h5`} stroke={c} strokeWidth="1.500" /><text x="717.500" y={90.5 + i * 15} fontSize="12" textLength={w} lengthAdjust="spacingAndGlyphs">{t}</text></g>
      ))}
      <text x="717.500" y="195.500" fontSize="12" textLength="134" lengthAdjust="spacingAndGlyphs">Overall RMS = 0.36376</text>
      {[["30", 82], ["25", 151], ["20", 219.5], ["15", 290], ["10", 358.5], ["5", 428.5]].map(([t, y]) => <text key={t} x="563" y={y} textAnchor="end">{t}</text>)}
      <path d="M540 70h26v4.500h-26z" fill="#fff" />
      <text transform="translate(537 310) rotate(-90)" textLength="117" fontSize="12.500" stroke="#111" strokeWidth=".3">Temperature, deg C</text>
      <path d="M584.500 446h292.500v142H584.500z" fill="none" stroke="#111" strokeWidth="1.600" />
      <path d={b ? "M584 474.300h293" : "M584 469.700h293"} stroke="#111" strokeWidth="1.400" />
      <path d={headGrid.map((y) => `M586 ${y}h290`).join("") + (b ? "M587 448v138M673 448v138M759 448v138M845.500 448v138" : "M589 448v138M602 448v138M609 448v138")} stroke="#777" strokeDasharray="1.300 5" fill="none" />
      <path d={yTicks(584, 4, 446, b ? 5.700 : 4.730, b ? 25 : 30) + yTicks(873, 4, 446, 5.700, 25) + headGrid.map((y) => `M584 ${y}h7M870 ${y}h7`).join("") + (b ? xTicks(446, 3, 587, 21.5, 14) + "M673 446v8M759 446v8M845.500 446v8" : xTicks(446, 4, 587, 3, 60) + xTicks(584, 4, 587, 3, 60) + "M602 446v8M602 580v8")} stroke="#111" strokeWidth="1.200" />
      {b ? <path d={headPath(headB)} fill="none" stroke="#000" strokeWidth="1.800" /> : <path d="M585 530l2 6 2-5 2 7 2-6 2 6 2-6 2 8 2-5 2 10 2-11 2 8 2-5 2 5 2-8 2 7 2-5 2 3 2-6" fill="none" stroke="#000" strokeWidth="4.500" />}
      {headLabels.map(([t, y]) => <text key={t} x="577.500" y={y} textAnchor="end">{t}</text>)}
      {!b && <text x="570" y="605.500">6/04 00</text>}
      <text transform="translate(537 573) rotate(-90)" textLength="114" fontSize="12.500" stroke="#111" strokeWidth=".3">Head Difference, m</text>
    </svg>
  );
}

const MenuText = ({ w, first, rest, className = "" }) => <T w={w} className={className}><u className="underline-offset-2">{first}</u>{rest}</T>;

function TempPro({ place, variant, k, file, status }) {
  const b = variant === "b";
  return (
    <div className={`absolute flex h-[808px] w-[1210px] flex-col bg-[#c0c0c0] font-['Liberation_Sans',Arial,sans-serif] shadow-[0_0_14px_rgba(0,0,0,0.35)] outline outline-1 outline-[#a8a8a8] ${place}`}>
      <div className="flex h-[38px] shrink-0 items-center bg-white pb-[2px] font-['Open_Sans',sans-serif]">
        <TempLogo className="ml-[10px] h-[20px] w-[20px]" />
        <span className="ml-[5px]" /><T w={106} className="text-[15px] text-[#999]">1DTempPro v2.0</T>
        <div className="ml-[921px] flex items-center text-[#888]"><Min /><span className="w-[44px]" /><Max /><span className="w-[45px]" /><Close /></div>
      </div>
      <div className="flex h-[30px] shrink-0 font-['Open_Sans',sans-serif] text-[15px]">
        <div className="flex w-[509px] items-center bg-[#f5f5f5] pb-[2px] pl-[19px] text-[#777]"><MenuText w={23} first="F" rest="ile" /><span className="w-[23px]" /><MenuText w={52} first="O" rest="ptions" /><span className="w-[25px]" /><MenuText w={30} first="H" rest="elp" /></div>
        <div className="w-[3px] bg-[#c0c0c0]" />
        <div className="flex w-[378px] items-center bg-linear-to-r from-[#f0f0f0] to-[#fbfbfb] pl-[8px] text-[#222]"><div className={`flex h-[25px] w-[150px] items-center border pb-[2px] pl-[10px] ${b ? "border-[#4aa0f0] bg-[#bfdfff]" : "border-transparent"}`}><MenuText w={126} first="D" rest="isplay Time Series" /></div></div>
      </div>
      <div className="flex h-[713px] items-start">
        <LeftPane k={k} file={file} />
        <DepthPanel />
        <div className="w-[3px] shrink-0" />
        <ChartPanel variant={variant} />
      </div>
      <div className="flex h-[27px] shrink-0 items-center border-t-2 border-[#d5d5d5] bg-[#f0f0f0] pb-[2px] pl-[24px] font-['Open_Sans',sans-serif] text-[15px] text-[#222]"><T w={162}>{status}</T></div>
    </div>
  );
}

/* ------------------------------------------------- Result dialog boxes */

function ResultDialog({ place, active, iterations, rms, k, sd }) {
  const rows = [
    ["Specific Discharge:", 139, "m/d", 25, "Not supplied", 73, "N/A", 25],
    ["Hydraulic Condictivity:", 158, "m/d", 25, k, 49, sd, sd.length * 7.2],
    ["Porosity:", 61, "", 1, "0.6", 19, "Fixed", 30],
    ["Thermal Conductivity:", 153, "W/(m C)", 51, "2", 8, "Fixed", 30],
    ["Sediment Heat Capacity:", 175, "J/(m^3 C)", 58, "2e+06", 38, "Fixed", 30],
    ["Dispersivity:", 85, "m", 10, "0.01", 26, "Fixed", 30],
  ];
  return (
    <div className={`absolute flex h-[334px] w-[668px] flex-col bg-[#f0f0f0] font-['Liberation_Sans',Arial,sans-serif] text-[15px] leading-none text-black shadow-[0_1px_16px_rgba(0,0,0,0.4)] ${place}`}>
      <div className={`flex h-[33px] shrink-0 items-center justify-between border-t bg-white pl-[4px] pr-[2px] font-['Open_Sans',sans-serif] ${active ? "border-[#2f95e8]" : "border-[#aaa]"}`}>
        <span className="flex pb-[2px]"><T w={185} className={active ? "text-[#111]" : "text-[#999]"}>Parameter Estimation Result</T></span>
        <div className={`flex h-[24px] w-[24px] items-center justify-center ${active ? "bg-[#c75050]" : "bg-[#e3e3e3]"}`}><svg className="h-[7px] w-[7px]" viewBox="0 0 7 7"><path d="M.5.5l6 6M6.500.5l-6 6" stroke={active ? "#fff" : "#f8f8f8"} strokeWidth="1.700" /></svg></div>
      </div>
      <div className="ml-[39px] mt-[12px] flex h-[18px] shrink-0 items-center"><T w={50} className="font-bold">Status:</T><span className="w-[15px]" /><T w={148}>{`Converged at ${iterations} iterations`}</T></div>
      <div className="ml-[39px] mt-[4px] flex h-[17px] shrink-0 items-center"><T w={76} className="font-bold">RMS Error:</T><span className="w-[17px]" /><T w={49}>{rms}</T></div>
      <div className="-mt-[8px] ml-[317px] flex h-[18px] shrink-0 items-center font-bold"><T w={40}>Value</T><span className="w-[89px]" /><T w={135}>Standard Deviation</T></div>
      <div className="ml-[18px] mt-[5px] w-[621px]">
        {rows.map(([label, lw, unit, uw, val, vw, dev, dw], i) => (
          <div key={label} className={`mb-px flex h-[29px] items-center pl-[14px] ${i === 1 ? "bg-[#afeeee]" : ""}`}>
            <div className="flex w-[193px] font-bold"><T w={lw}>{label}</T></div>
            <div className="flex w-[97px]"><T w={uw}>{unit}</T></div>
            <div className="flex w-[138px]"><T w={vw}>{val}</T></div>
            <T w={dw}>{dev}</T>
          </div>
        ))}
      </div>
      <div className="ml-[286px] mt-[11px] h-[30px] w-[95px] shrink-0 border-[3px] border-[#0078d7] bg-[#e1e1e1]" />
    </div>
  );
}

/* -------------------------------------------------------------- Taskbar */

const apps = [
  [<svg className="h-[26px] w-[25px]" viewBox="0 0 25 26"><path d="M0 12C2 3 8 0 13 0c8 0 12 6 12 12v3H8c0 6 8 7 14 3v6c-8 4-20 1-20-9 0-5 3-8 7-10C4 6 1 9 0 12zm8-2h9c0-6-8-6-9 0z" fill="#0f7fdb" /></svg>, false],
  [<svg className="h-[23px] w-[28px]" viewBox="0 0 28 23"><path d="M0 1h9l2 3h17v19H0z" fill="#f7d673" /><path d="M2 0h10v3H2z" fill="#e8b63c" /><path d="M6 23v-8q0-3 3-3h10q3 0 3 3v8h-4v-5h-8v5z" fill="#36a8e0" /></svg>, true],
  [<svg className="h-[29px] w-[27px]" viewBox="0 0 27 29"><path d="M0 9l26-3v23L0 26z" fill="#fff" /><path d="M8 8V5c0-5 10-5 10 0v2" fill="none" stroke="#fff" strokeWidth="1.600" /><path d="M4 14l6-1v4H4zM11.500 12.800l7-.8v5h-7zM4 18.500h6v4l-6-.6zM11.500 18.500h7v5l-7-.7z" fill="#222" /></svg>, false],
  [<svg className="h-[28px] w-[28px]" viewBox="0 0 28 28"><circle cx="14" cy="14" r="14" fill="#fcc934" /><path d="M14 0a14 14 0 0112.100 7H14a7 7 0 00-6 10.500L1.900 7A14 14 0 0114 0z" fill="#dd4b3e" /><path d="M1.900 7l6.100 10.500A7 7 0 0014 21l-3 6.700A14 14 0 011.900 7z" fill="#1e9e5a" /><circle cx="14" cy="14" r="6.500" fill="#fff" /><circle cx="14" cy="14" r="5.200" fill="#4587f3" /></svg>, true],
  [<svg className="h-[25px] w-[28px]" viewBox="0 0 28 25"><path d="M14 0l14 14h-4v11h-7v-8h-6v8H4V14H0z" fill="#fff" /></svg>, false],
  [<svg className="h-[22px] w-[22px]" viewBox="0 0 22 22" fill="none"><path d="M11 0v22M1 11h20M4 4l14 14M18 4L4 18M7 6l4-2 4 2 2 5-2 5-4 2-4-2-2-5z" stroke="#ddd" strokeWidth="1.200" /><path d="M4 12l3-2 4 4 4-5 4 3" stroke="#e01b24" strokeWidth="2.400" /></svg>, true],
  [<svg className="h-[28px] w-[28px]" viewBox="0 0 28 28" fill="none" stroke="#111" strokeLinecap="round"><circle cx="14" cy="14" r="14" fill="#1ed760" stroke="none" /><path d="M6 9.500c6-2 12-1.500 17 1.500" strokeWidth="2.800" /><path d="M7 14.500c5-1.600 10-1 14 1.400" strokeWidth="2.300" /><path d="M7.500 19c4-1.200 8.500-.8 12 1.200" strokeWidth="2" /></svg>, true],
  [<ExcelLogo className="h-[27px] w-[28px]" />, true],
  [<TempLogo className="h-[30px] w-[30px]" />, true, true],
  [<ExcelLogo className="h-[27px] w-[28px]" color="#2b579a" letter="W" />, true],
];

function Taskbar() {
  return (
    <div className="absolute left-0 top-[1030px] flex h-[50px] w-[1920px] items-stretch bg-black/85 font-['Open_Sans',sans-serif] text-white">
      <div className="flex w-[60px] items-center justify-center bg-black"><svg className="h-[20px] w-[20px]" viewBox="0 0 20 20" fill="#fff"><path d="M0 3l8.500-1.200v7.700H0zM9.500 1.600L20 0v9.500H9.500zM0 10.500h8.500v7.700L0 17zM9.500 10.500H20V20L9.500 18.500z" /></svg></div>
      <div className="flex w-[430px] items-center bg-[#333]">
        <svg className="ml-[11px] h-[28px] w-[28px]" viewBox="0 0 28 28"><circle cx="14" cy="14" r="12" fill="none" stroke="#fff" strokeWidth="3.200" /></svg>
        <span className="w-[6px]" /><T w={132} className="text-[18px] text-[#a5a5a5]">Ask me anything</T>
        <svg className="ml-[220px] h-[21px] w-[14px]" viewBox="0 0 14 21" fill="none" stroke="#aaa" strokeWidth="1.300"><path d="M4 1h6v12H4zM1 9v6q0 2 2 2h8q2 0 2-2V9M7 17v3M4 20h6" /></svg>
      </div>
      <div className="flex w-[62px] items-center justify-center pr-[2px]"><svg className="h-[18px] w-[25px]" viewBox="0 0 25 18" fill="none" stroke="#fff" strokeWidth="1.300"><path d="M5 .7h15v16.600H5zM3 3H1v12h2M22 3h2v12h-2" /></svg></div>
      {apps.map(([icon, open, active], i) => (
        <div key={i} className={`flex w-[62px] flex-col items-center ${active ? "bg-[#3a3d3f]" : ""}`}><div className="flex h-[47px] items-center pt-[2px]">{icon}</div>{open && <div className={`h-[3px] bg-[#a9d8f7] ${active ? "w-[60px]" : "w-[51px]"}`} />}</div>
      ))}
      <div className="ml-[515px] flex items-center">
        <svg className="h-[9px] w-[16px]" viewBox="0 0 16 9"><path d="M.7 8.300L8 1l7.300 7.300" fill="none" stroke="#fff" strokeWidth="1.400" /></svg>
        <svg className="ml-[12px] h-[18px] w-[20px]" viewBox="0 0 20 18" fill="none" stroke="#fff" strokeWidth="1.200"><path d="M4 6h13.500v10H3v-6M18 9h1.500v4H18M1 1v2M5 1v2M0 3.500h6v2q0 2-3 2t-3-2zM3 7v4" /><path d="M6 8h10v6.500H5z" fill="#fff" /></svg>
        <svg className="ml-[10px] h-[19px] w-[19px]" viewBox="0 0 19 19"><circle cx="9.500" cy="9.500" r="9.500" fill="#f3b765" /><path d="M0 10q5-4 9-1l9 5q-3 5-8.500 5Q1 18 0 10z" fill="#6f8fc0" /></svg>
        <div className="ml-[17px] flex w-[60px] flex-col items-center gap-[7px] pb-[2px] text-[15px] leading-[16px]"><T w={52}>7:51 PM</T><T w={59}>4/9/2017</T></div>
        <svg className="ml-[27px] h-[20px] w-[21px]" viewBox="0 0 21 20" fill="none" stroke="#fff" strokeWidth="1.300"><path d="M.7.7h19.600v14.600H14l-3.500 3.700L7 15.300H.7z" /></svg>
      </div>
    </div>
  );
}

export default function App() {
  return (
    <div className="relative h-[1080px] w-[1920px] overflow-hidden bg-[#394a55]">
      <Excel />
      <Chrome />
      <TempPro place="left-[140px] top-[131px]" variant="a" k="0.21778" file="scaleddh1.csv" status="29/2016 2:19 PM, 6.90°C)" />
      <TempPro place="left-[754px] top-[214px]" variant="b" k="0.77954" file="scaleddh2.csv" status="29/2016 2:19 PM, 6.90°C)" />
      <ResultDialog place="left-[110px] top-[736px]" active iterations={3} rms="0.41528" k="0.21778" sd="0.00038159" />
      <ResultDialog place="left-[1242px] top-[783px]" iterations={2} rms="0.36376" k="0.77954" sd="0.0021302" />
      <Taskbar />
    </div>
  );
}
